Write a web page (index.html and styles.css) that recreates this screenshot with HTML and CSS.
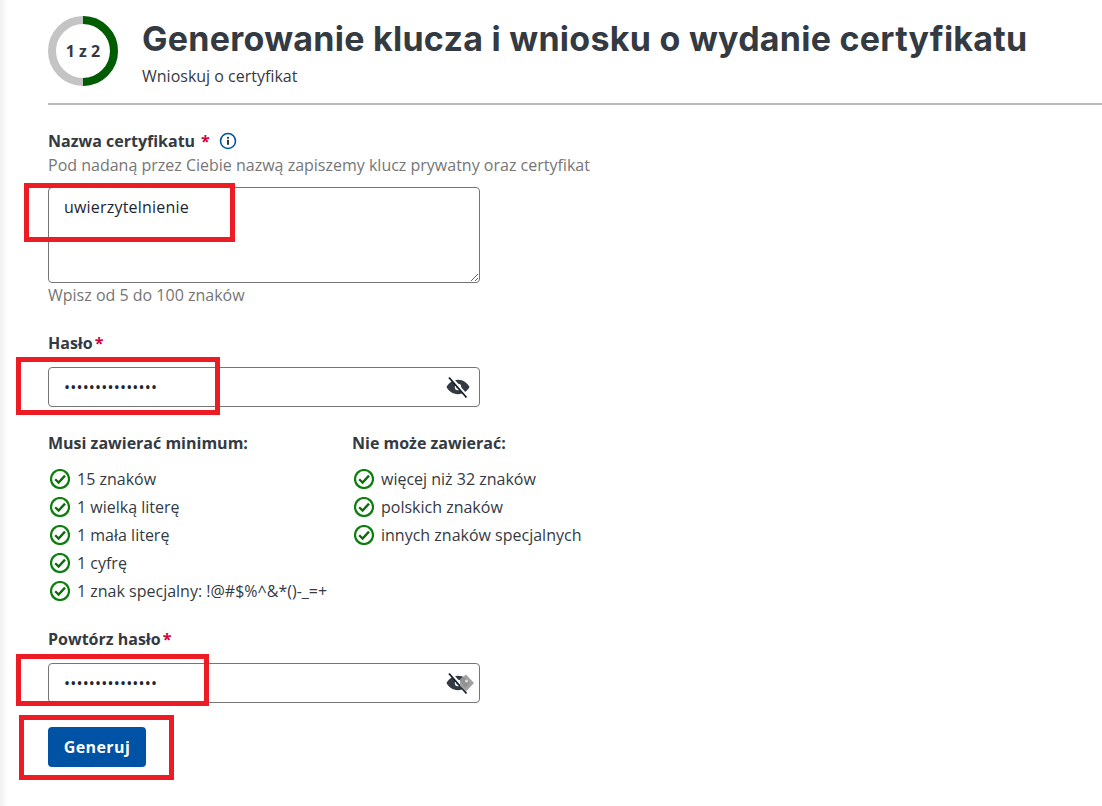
FILE: index.html
```html
<!DOCTYPE html>
<html lang="pl">
<head>
    <meta charset="UTF-8">
    <meta name="viewport" content="width=device-width, initial-scale=1.0">
    <title>Generowanie klucza</title>
    <link rel="stylesheet" href="styles.css">
</head>
<body>
    <svg class="defs" width="0" height="0">
        <symbol id="check" viewBox="0 0 20 20">
            <circle cx="10" cy="10" r="9" fill="none" stroke="#0b7f0b" stroke-width="2.200"/>
            <path d="M5.200 10.200l3.400 3.400 6.400-7" fill="none" stroke="#0b6b0b" stroke-width="2.300"/>
        </symbol>
        <symbol id="eye" viewBox="0 0 24 24">
            <path d="M12 4.800c-5.400 0-9.400 3.300-11.500 7.200 2.100 3.900 6.100 7.200 11.500 7.200s9.400-3.300 11.500-7.200c-2.100-3.900-6.100-7.200-11.500-7.200z" fill="#333a44"/>
            <circle cx="12" cy="12" r="3.200" fill="#fff"/>
            <circle cx="12" cy="12" r="1.600" fill="#333a44"/>
            <path d="M4.500 2l17 20" stroke="#fff" stroke-width="3"/>
            <path d="M3 2.500l17.500 20" stroke="#16202c" stroke-width="1.800"/>
        </symbol>
    </svg>

    <div class="page">
        <div class="header">
            <div class="ring">
                <svg width="70" height="70" viewBox="0 0 70 70">
                    <circle cx="35" cy="35" r="31" fill="none" stroke="#c4c4c4" stroke-width="8"/>
                    <path d="M35 4a31 31 0 0 1 0 62" fill="none" stroke="#005c00" stroke-width="8"/>
                </svg>
                <span class="ring-text">1 z 2</span>
            </div>
            <div class="titles">
                <h1>Generowanie klucza i wniosku o wydanie certyfikatu</h1>
                <p>Wnioskuj o certyfikat</p>
            </div>
        </div>

        <div class="form">
            <div class="label-row">
                <label>Nazwa certyfikatu</label>
                <span class="star">*</span>
                <svg class="info" width="18" height="18" viewBox="0 0 18 18">
                    <circle cx="9" cy="9" r="7.500" fill="none" stroke="#0052a5" stroke-width="1.600"/>
                    <rect x="8.100" y="7.800" width="1.800" height="5" fill="#1d2530"/>
                    <rect x="8.100" y="4.900" width="1.800" height="1.800" fill="#1d2530"/>
                </svg>
            </div>
            <div class="hint top">Pod nadaną przez Ciebie nazwą zapiszemy klucz prywatny oraz certyfikat</div>
            <textarea class="field area">uwierzytelnienie</textarea>
            <div class="hint">Wpisz od 5 do 100 znaków</div>

            <div class="label-row pass-label">
                <label>Hasło</label><span class="star tight">*</span>
            </div>
            <div class="pass">
                <input class="field" type="password" value="aaaaaaaaaaaaaaa">
                <svg class="eye" width="24" height="24"><use href="#eye"/></svg>
            </div>

            <div class="rules">
                <div class="rule-col must">
                    <h4>Musi zawierać minimum:</h4>
                    <ul>
                        <li><svg width="20" height="20"><use href="#check"/></svg>15 znaków</li>
                        <li><svg width="20" height="20"><use href="#check"/></svg>1 wielką literę</li>
                        <li><svg width="20" height="20"><use href="#check"/></svg>1 mała literę</li>
                        <li><svg width="20" height="20"><use href="#check"/></svg>1 cyfrę</li>
                        <li><svg width="20" height="20"><use href="#check"/></svg>1 znak specjalny: !@#$%^&amp;*()-_=+</li>
                    </ul>
                </div>
                <div class="rule-col">
                    <h4>Nie może zawierać:</h4>
                    <ul>
                        <li><svg width="20" height="20"><use href="#check"/></svg>więcej niż 32 znaków</li>
                        <li><svg width="20" height="20"><use href="#check"/></svg>polskich znaków</li>
                        <li><svg width="20" height="20"><use href="#check"/></svg>innych znaków specjalnych</li>
                    </ul>
                </div>
            </div>

            <div class="label-row repeat-label">
                <label>Powtórz hasło</label><span class="star tight">*</span>
            </div>
            <div class="pass">
                <input class="field" type="password" value="aaaaaaaaaaaaaaa">
                <svg class="eye" width="24" height="24"><use href="#eye"/></svg>
                <svg class="manager" width="16" height="18" viewBox="0 0 16 18"><path d="M8 .5L16 9l-8 8.500-6-5.500V5z" fill="#9a9a9a" fill-opacity=".92"/><circle cx="8.500" cy="7" r="1.500" fill="#dedede"/></svg>
            </div>

            <button class="btn">Generuj</button>
        </div>
    </div>

    <!-- czerwone ramki z zrzutu -->
    <div class="mark mark-name"></div>
    <div class="mark mark-pass"></div>
    <div class="mark mark-repeat"></div>
    <div class="mark mark-btn"></div>
</body>
</html>
```

FILE: styles.css
```css
* { margin: 0; padding: 0; box-sizing: border-box; }
html, body { height: 806px; overflow: hidden; }
body { position: relative; background: #fff; color: #343a42; font-family: "Open Sans", "Liberation Sans", sans-serif; font-size: 16px; }
body::before { content: ""; position: absolute; left: 0; top: 0; bottom: 0; width: 8px; background: linear-gradient(90deg, #f1f1f1, #fff); }
.defs { position: absolute; }
.page { padding: 16px 0 0 48px; }

.header { display: flex; gap: 24px; padding-bottom: 17px; border-bottom: 2px solid #bbb; }
.ring { position: relative; width: 70px; height: 70px; flex: none; }
.ring-text { position: absolute; inset: 0; display: flex; align-items: center; justify-content: center; font-size: 16px; font-weight: 700; }
.titles h1 { font-family: Inter, "Noto Sans", sans-serif; font-size: 34px; font-weight: 700; letter-spacing: 0.26px; line-height: 44px; margin-top: 1px; color: #343a42; white-space: nowrap; }
.titles p { font-size: 16px; line-height: 20px; margin-top: 5px; }

.form { width: 432px; padding-top: 25px; }
.label-row { display: flex; align-items: center; height: 22px; white-space: nowrap; }
.label-row label { font-weight: 700; font-size: 16px; }
.star { color: #d4003c; font-weight: 700; margin-left: 6px; }
.star.tight { margin-left: 2px; }
.info { margin-left: 9px; }
.hint { color: #767676; font-size: 16px; line-height: 24px; white-space: nowrap; }
.hint.top { margin-top: 1px; }

.field { display: block; width: 432px; border: 1px solid #757575; border-radius: 4px; background: #fff; color: #1d2530; font-family: inherit; font-size: 16px; letter-spacing: 0.2px; padding: 0 15px; outline: none; }
.area { height: 96px; margin-top: 10px; padding-top: 7px; line-height: 24px; }
input.field { height: 40px; }
.pass { position: relative; width: 432px; }
.eye { position: absolute; right: 10px; top: 8px; }
.manager { position: absolute; right: 6px; top: 11px; }
.pass-label { margin-top: 25px; margin-bottom: 13px; }

.rules { display: flex; margin-top: 24px; }
.rule-col { flex: none; }
.rule-col h4 { font-size: 16px; font-weight: 700; line-height: 24px; margin-bottom: 10px; }
.must { width: 304px; }
.rule-col ul { list-style: none; }
.rule-col li { display: flex; align-items: center; gap: 7px; height: 28px; font-size: 16px; white-space: nowrap; }
.rule-col li svg { margin-left: 2px; }

.repeat-label { margin-top: 23px; margin-bottom: 13px; }
.btn { display: block; margin-top: 24px; width: 98px; height: 40px; border: none; border-radius: 4px; background: #0052a5; color: #fff; font-family: inherit; font-size: 16px; font-weight: 700; letter-spacing: 0.4px; }

.mark { position: absolute; border: 5px solid #ed1c24; }
.mark-name { left: 24px; top: 183px; width: 211px; height: 59px; }
.mark-pass { left: 16px; top: 357px; width: 204px; height: 58px; }
.mark-repeat { left: 16px; top: 654px; width: 193px; height: 52px; }
.mark-btn { left: 19px; top: 715px; width: 155px; height: 65px; }
```
